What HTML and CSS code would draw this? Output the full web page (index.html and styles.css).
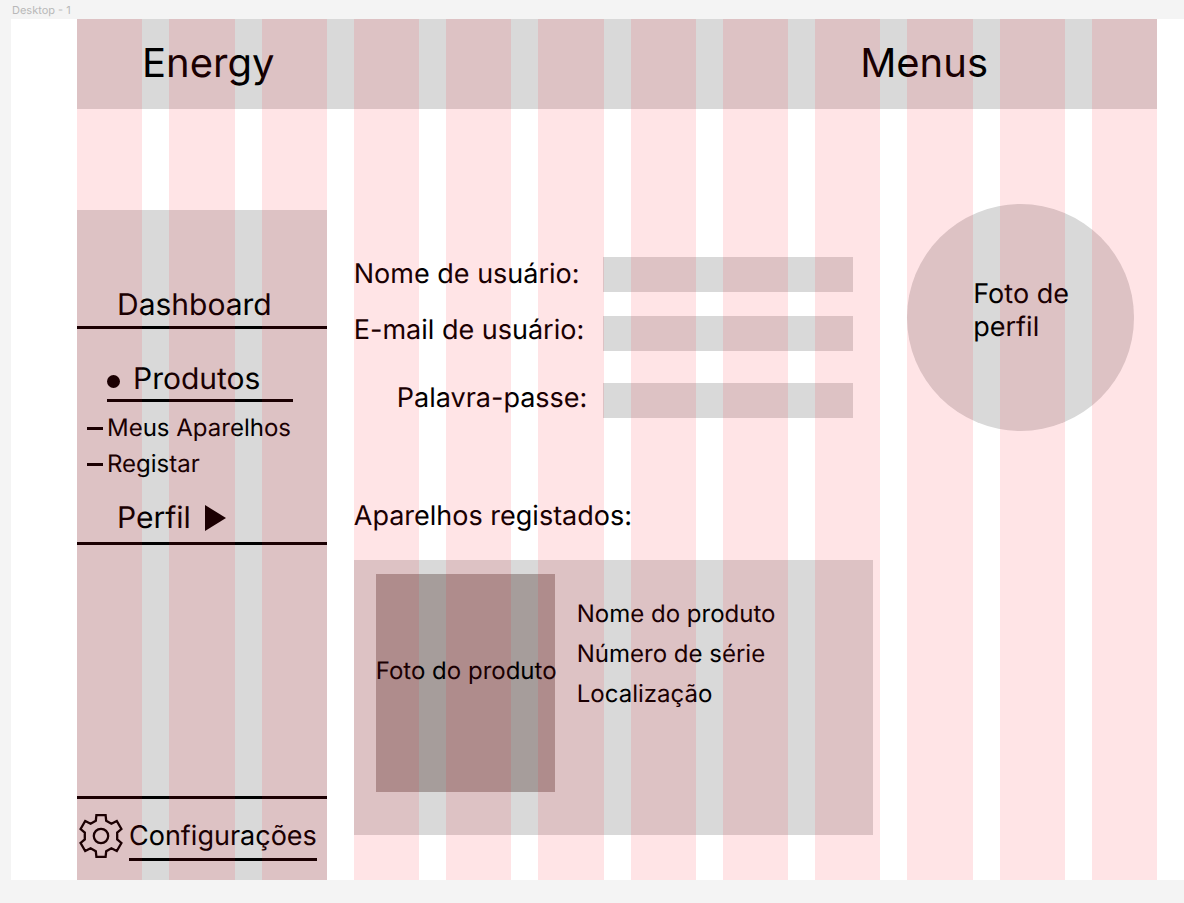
FILE: index.html
```html
<!DOCTYPE html>
<html lang="pt">
<head>
<meta charset="utf-8">
<meta name="viewport" content="width=device-width, initial-scale=1">
<title>Energy</title>
<link rel="stylesheet" href="styles.css">
</head>
<body>
<div class="frame-label">Desktop - 1</div>
<div class="frame">
  <header class="topbar">
    <h1 class="brand">Energy</h1>
    <button class="menus" type="button">Menus</button>
  </header>
  <div class="layout">
    <nav class="sidebar">
      <a class="nav-item" href="#">Dashboard</a>
      <a class="nav-group" href="#"><span class="dot"></span>Produtos</a>
      <a class="nav-sub" href="#"><span class="dash"></span>Meus Aparelhos</a>
      <a class="nav-sub" href="#"><span class="dash"></span>Registar</a>
      <a class="nav-item nav-profile" href="#">Perfil
        <svg class="arrow" viewBox="0 0 21 26" aria-hidden="true"><path d="M0 0L21 13L0 26Z"/></svg>
      </a>
      <div class="settings">
        <svg class="gear" viewBox="0 0 44 44" aria-hidden="true">
          <path d="M17.4 1.2H26.6L27.2 6.8L32.4 9.8L37.8 7L42.4 15L38.2 18.6V25.4L42.4 29L37.8 37L32.4 34.2L27.2 37.2L26.6 42.8H17.4L16.8 37.2L11.6 34.2L6.2 37L1.6 29L5.8 25.4V18.6L1.6 15L6.2 7L11.6 9.8L16.8 6.8Z"/>
          <circle cx="22" cy="22" r="7.2"/>
        </svg>
        <a class="settings-link" href="#">Configurações</a>
      </div>
    </nav>
    <main class="content">
      <form class="form">
        <label for="nome">Nome de usuário:</label>
        <input id="nome" type="text">
        <label class="raised" for="email">E-mail de usuário:</label>
        <input id="email" type="email">
        <label class="indented" for="passe">Palavra-passe:</label>
        <input class="spaced" id="passe" type="password">
      </form>
      <h2 class="section-title">Aparelhos registados:</h2>
      <article class="card">
        <div class="photo">Foto do produto</div>
        <ul class="details">
          <li>Nome do produto</li>
          <li>Número de série</li>
          <li>Localização</li>
        </ul>
      </article>
    </main>
    <aside class="profile">
      <div class="avatar">Foto de perfil</div>
    </aside>
  </div>
  <div class="columns" aria-hidden="true">
    <i></i><i></i><i></i><i></i><i></i><i></i><i></i><i></i><i></i><i></i><i></i><i></i>
  </div>
</div>
</body>
</html>
```
FILE: styles.css
```css
* {
  box-sizing: border-box;
}

body {
  display: flex;
  flex-direction: column;
  min-height: 100vh;
  margin: 0;
  padding: 0 0 23px 11px;
  background: #f4f4f4;
  color: #000;
  font-family: Inter, "Liberation Sans", sans-serif;
  font-size: 27px;
  font-weight: 385;
  line-height: 36px;
  text-rendering: geometricPrecision;
}

a {
  color: inherit;
  text-decoration: none;
}

h1,
h2,
ul {
  margin: 0;
  padding: 0;
  font-weight: inherit;
}

.frame-label {
  height: 19px;
  padding-left: 1px;
  color: #b8b8b8;
  font-size: 11px;
  font-weight: 400;
  line-height: 20px;
}

.frame {
  position: relative;
  display: flex;
  flex: 1;
  flex-direction: column;
  padding: 0 27px 0 66px;
  background: #fff;
}

/* Layout grid drawn over the whole frame */
.columns {
  position: absolute;
  inset: 0 27px 0 66px;
  display: grid;
  grid-template-columns: repeat(12, 1fr);
  column-gap: 27px;
  pointer-events: none;
}

.columns i {
  background: rgba(255, 0, 16, 0.105);
}

.topbar {
  display: flex;
  justify-content: space-between;
  padding: 19px 169px 21px 65px;
  background: #d9d9d9;
}

.brand,
.menus {
  font-size: 40px;
  line-height: 50px;
}

.menus {
  padding: 0;
  border: 0;
  background: none;
  color: inherit;
  font-family: inherit;
  font-weight: inherit;
}

.layout {
  display: grid;
  flex: 1;
  grid-template-columns: repeat(12, 1fr);
  column-gap: 27px;
  padding-top: 95px;
}

.sidebar {
  display: flex;
  flex-direction: column;
  grid-column: span 3;
  margin-top: 6px;
  padding-top: 77px;
  background: #d9d9d9;
}

.nav-item {
  display: flex;
  align-items: center;
  gap: 14px;
  padding: 0 0 3px 40px;
  border-bottom: 3px solid #000;
  font-size: 30px;
}

.nav-group {
  display: flex;
  align-items: center;
  gap: 13px;
  margin: 32px 34px 8px 30px;
  padding-bottom: 2px;
  border-bottom: 3px solid #000;
  font-size: 30px;
}

.dot {
  width: 13px;
  height: 13px;
  margin-top: 4px;
  border-radius: 50%;
  background: #000;
}

.nav-sub {
  display: flex;
  align-items: center;
  gap: 4px;
  padding-left: 10px;
  font-size: 24px;
}

.dash {
  width: 16px;
  height: 3px;
  background: #000;
}

.nav-profile {
  margin-top: 18px;
  padding-bottom: 6px;
}

.arrow {
  width: 21px;
  height: 26px;
}

.settings {
  display: flex;
  align-items: flex-start;
  gap: 6px;
  margin-top: auto;
  padding: 15px 12px 19px 2px;
  border-top: 3px solid #000;
}

.gear {
  flex: none;
  width: 44px;
  height: 44px;
  fill: none;
  stroke: #000;
  stroke-width: 2.3;
}

.settings-link {
  padding: 4px 0;
  border-bottom: 3px solid #000;
}

.content {
  grid-column: span 6;
  padding: 53px 7px 0 0;
}

.form {
  display: grid;
  grid-template-columns: 1fr 250px;
  row-gap: 24px;
  margin-right: 20px;
}

.form label {
  line-height: 33px;
}

.form .raised {
  line-height: 28px;
}

.form .indented {
  margin: 6px 0 0 43px;
}

.form input {
  width: 100%;
  height: 35px;
  padding: 0 8px;
  border: 0;
  background: #d9d9d9;
  font: inherit;
}

.form .spaced {
  margin-top: 8px;
}

.section-title {
  margin: 80px 0 26px;
  font-size: 27px;
}

.card {
  display: flex;
  gap: 22px;
  padding: 14px 22px 43px;
  background: #d9d9d9;
  font-size: 24px;
}

.photo {
  display: flex;
  flex: none;
  align-items: center;
  width: 179px;
  height: 218px;
  padding-bottom: 24px;
  background: #a69d9b;
  white-space: nowrap;
}

.details {
  margin-top: 20px;
  line-height: 40px;
  list-style: none;
}

.profile {
  grid-column: span 3;
}

.avatar {
  width: 227px;
  height: 227px;
  padding: 73px 40px 0 66px;
  border-radius: 50%;
  background: #d9d9d9;
  line-height: 33px;
}
```
